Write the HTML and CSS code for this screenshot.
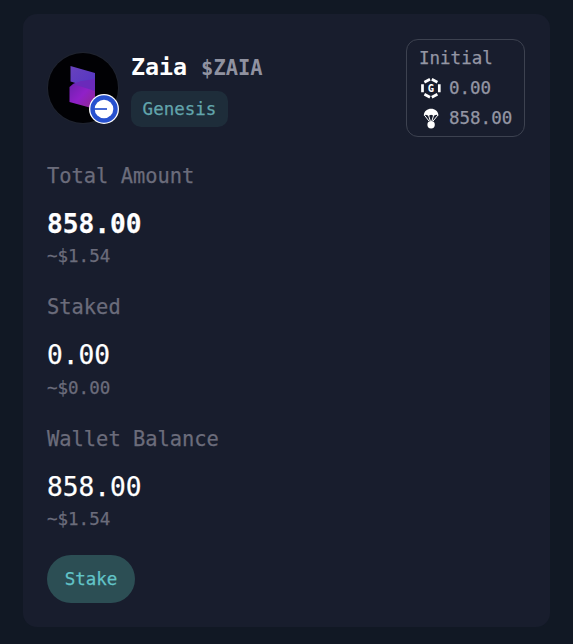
FILE: index.html
```html
<!DOCTYPE html>
<html lang="en">
<head>
    <meta charset="UTF-8">
    <meta name="viewport" content="width=device-width, initial-scale=1.0">
    <title>Zaia</title>
    <link rel="stylesheet" href="styles.css">
</head>
<body>
    <div class="card">
        <div class="header">
            <div class="avatar">
                <svg class="logo" viewBox="0 0 70 70">
                    <defs>
                        <linearGradient id="topFill" x1="0" y1="0" x2="1" y2="1">
                            <stop offset="0" stop-color="#6842bd"/>
                            <stop offset="1" stop-color="#5234c4"/>
                        </linearGradient>
                        <linearGradient id="bottomFill" x1="0" y1="0" x2="1" y2="1">
                            <stop offset="0" stop-color="#6a20ac"/>
                            <stop offset="0.5" stop-color="#9020c8"/>
                            <stop offset="1" stop-color="#8c2a88"/>
                        </linearGradient>
                    </defs>
                    <circle cx="35" cy="35" r="35" fill="#010104"/>
                    <path d="M22.500 13L47 20V38L37 33L22.500 28.500Z" fill="url(#topFill)"/>
                    <path d="M21.500 34L25 31L34 28L47 37V56L21.500 49Z" fill="url(#bottomFill)"/>
                    <path d="M25 31L34 28L47 26V38L36 34.500Z" fill="#6a2aba"/>
                </svg>
                <svg class="chain" viewBox="0 0 30 30">
                    <circle cx="15" cy="15" r="15" fill="#fff"/>
                    <circle cx="15" cy="15" r="13.700" fill="#2751cf"/>
                    <circle cx="15" cy="15" r="9.300" fill="#fff"/>
                    <path d="M5 15H18" stroke="#2751cf" stroke-width="1.700"/>
                </svg>
            </div>
            <div class="title">
                <div class="names">
                    <span class="name">Zaia</span>
                    <span class="ticker">$ZAIA</span>
                </div>
                <span class="tag">Genesis</span>
            </div>
            <div class="initial">
                <div class="initial-title">Initial</div>
                <div class="initial-row">
                    <svg class="icon" viewBox="0 0 23 23">
                        <path d="M12.800 2.300L18.400 5.300M20.300 7.200V15.300M18.400 17.300L12.800 20.300M11 20.300L5.400 17.300M3.500 15.300V7.200M5.400 5.300L11 2.300" fill="none" stroke="#fff" stroke-width="2.700"/>
                        <text class="icon-letter" x="11.900" y="15.200">G</text>
                    </svg>
                    <span>0.00</span>
                </div>
                <div class="initial-row">
                    <svg class="icon" viewBox="0 0 23 23">
                        <path d="M4.800 8.500C5.100 4 8.300 1.800 12.100 1.800S19.100 4 19.500 8.500L17.300 7.800L14.700 8.800L12.100 7.800L9.500 8.800L6.900 7.800Z" fill="#fff"/>
                        <path d="M5.300 8L10 14M9.500 8L11.300 14M14.700 8L12.900 14M19 8L14.100 14" fill="none" stroke="#fff" stroke-width="1"/>
                        <circle cx="12.100" cy="17.800" r="3.700" fill="#fff"/>
                    </svg>
                    <span>858.00</span>
                </div>
            </div>
        </div>
        <div class="stat">
            <div class="label">Total Amount</div>
            <div class="amount bold">858.00</div>
            <div class="usd">~$1.54</div>
        </div>
        <div class="stat">
            <div class="label">Staked</div>
            <div class="amount">0.00</div>
            <div class="usd">~$0.00</div>
        </div>
        <div class="stat">
            <div class="label">Wallet Balance</div>
            <div class="amount">858.00</div>
            <div class="usd">~$1.54</div>
        </div>
        <button class="stake">Stake</button>
    </div>
</body>
</html>
```

FILE: styles.css
```css
* {
    box-sizing: border-box;
}
body {
    margin: 0;
    height: 644px;
    padding: 14px 23px 17px;
    background-color: #111824;
    color: #fff;
    font-family: "DejaVu Sans Mono", monospace;
    -webkit-text-stroke: 0.25px;
}
.card {
    height: 613px;
    padding: 25px 25px 24px 24px;
    border-radius: 14px;
    background-color: #181d2d;
}
.header {
    display: flex;
    height: 98px;
}
.avatar {
    position: relative;
    width: 72px;
    height: 72px;
    margin-top: 13px;
    border: 1px solid #20242e;
    border-radius: 50%;
}
.logo {
    display: block;
    width: 70px;
    height: 70px;
}
.chain {
    position: absolute;
    right: -1px;
    bottom: -1px;
    width: 30px;
    height: 30px;
}
.title {
    margin: 12px 0 0 12px;
}
.names {
    display: flex;
    align-items: baseline;
    gap: 14px;
    height: 32px;
    line-height: 32px;
    font-weight: bold;
    -webkit-text-stroke: 0;
}
.name {
    font-size: 23.3px;
}
.ticker {
    font-size: 20.4px;
    color: #9092a0;
}
.tag {
    display: block;
    width: 97px;
    height: 36px;
    margin-top: 8px;
    border-radius: 10px;
    background-color: #1e2d3a;
    color: #62a5ac;
    font-size: 17.5px;
    line-height: 36px;
    text-align: center;
}
.initial {
    width: 119px;
    height: 98px;
    margin-left: auto;
    padding: 3px 0 0 12px;
    border: 1px solid #3d4250;
    border-radius: 12px;
    color: #9496a4;
    font-size: 17.5px;
    line-height: 30px;
}
.initial-row {
    display: flex;
    align-items: center;
    gap: 7px;
    height: 30px;
}
.initial-title {
    height: 30px;
}
.icon {
    width: 23px;
    height: 23px;
}
.icon-letter {
    fill: #fff;
    font-size: 10.5px;
    font-weight: bold;
    text-anchor: middle;
}
.stat {
    height: 131.4px;
    padding-top: 25px;
}
.label {
    height: 28px;
    color: #6b6c7b;
    font-size: 20.4px;
    line-height: 28px;
}
.amount {
    height: 36px;
    margin-top: 16px;
    font-size: 26.2px;
    line-height: 36px;
}
.bold {
    font-weight: bold;
}
.usd {
    height: 28px;
    margin-top: 0.3px;
    color: #6b6c7b;
    font-size: 17.5px;
    line-height: 28px;
}
.stake {
    display: block;
    width: 88px;
    height: 48px;
    margin-top: 23.8px;
    padding: 0;
    border: none;
    border-radius: 24px;
    background-color: #2c4e54;
    color: #62c4c8;
    font-family: inherit;
    font-size: 17.5px;
}
```
